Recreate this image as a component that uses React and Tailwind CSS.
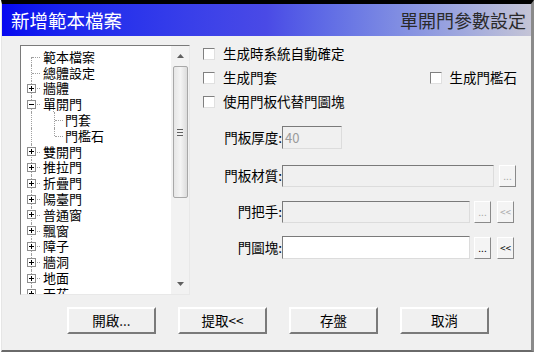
import React from "react";

const font = { fontFamily: '"Noto Sans CJK TC", "Noto Sans", sans-serif' };

function Expander({ minus }) {
  return (
    <span className="relative z-10 flex h-[9px] w-[9px] items-center justify-center border border-[#8e8e8e] bg-white">
      <span className="absolute h-px w-[5px] bg-black" />
      {!minus && <span className="absolute h-[5px] w-px bg-black" />}
    </span>
  );
}

const treeItems = [
  { t: "範本檔案", kind: "leaf" },
  { t: "總體設定", kind: "leaf" },
  { t: "牆體", kind: "plus" },
  { t: "單開門", kind: "minus" },
  { t: "門套", kind: "child" },
  { t: "門檻石", kind: "childLast" },
  { t: "雙開門", kind: "plus" },
  { t: "推拉門", kind: "plus" },
  { t: "折疊門", kind: "plus" },
  { t: "陽臺門", kind: "plus" },
  { t: "普通窗", kind: "plus" },
  { t: "飄窗", kind: "plus" },
  { t: "障子", kind: "plus" },
  { t: "牆洞", kind: "plus" },
  { t: "地面", kind: "plus" },
  { t: "天花", kind: "plus" },
];

function TreeRow({ item, idx }) {
  const dotV = "border-l border-dotted border-[#a0a0a0]";
  const dotH = "border-t border-dotted border-[#a0a0a0]";
  const isChild = item.kind === "child" || item.kind === "childLast";
  return (
    <div className="relative flex h-[15.8px] items-center">
      <div className="relative flex h-full w-[21px] items-center">
        <span className={`absolute left-[10px] ${idx === 0 ? "top-1/2" : "top-0"} bottom-0 ${dotV}`} />
        <span className={`absolute left-[11px] top-1/2 w-[8px] ${isChild ? "" : dotH}`} />
        {(item.kind === "plus" || item.kind === "minus") && (
          <span className="ml-[6px]">
            <Expander minus={item.kind === "minus"} />
          </span>
        )}
      </div>
      {isChild && (
        <div className="relative h-full w-[22px]">
          <span className={`absolute left-[12px] top-0 ${item.kind === "childLast" ? "h-1/2" : "bottom-0"} ${dotV}`} />
          <span className={`absolute left-[13px] top-1/2 w-[8px] ${dotH}`} />
        </div>
      )}
      {item.kind === "minus" && (
        <span className="absolute left-[32px] top-[11px] bottom-0 border-l border-dotted border-[#a0a0a0]" />
      )}
      <span className="ml-[1px] whitespace-nowrap text-[13px] leading-[14px] text-black">{item.t}</span>
    </div>
  );
}

function Checkbox({ label }) {
  return (
    <div className="flex items-center">
      <span className="h-[12px] w-[12px] border border-t-[#808080] border-l-[#808080] border-b-[#e0e0e0] border-r-[#e0e0e0] bg-white" />
      <span className="ml-[8px] text-[13.5px] leading-none text-black">{label}</span>
    </div>
  );
}

function Field({ disabled }) {
  return (
    <div
      className={`h-full flex-1 border border-t-[#7a7a7a] border-l-[#7a7a7a] border-b-[#dcdcdc] border-r-[#dcdcdc] ${
        disabled ? "bg-[#f0f0f0]" : "bg-white"
      }`}
    />
  );
}

function SmallBtn({ children, disabled }) {
  return (
    <div
      className={`flex h-[22px] w-[17px] items-center justify-center border border-t-white border-l-white border-b-[#8a8a8a] border-r-[#8a8a8a] bg-[#f4f4f4] text-[10px] leading-none ${
        disabled ? "text-[#a8a8a8]" : "text-black"
      }`}
    >
      {children}
    </div>
  );
}

function BigBtn({ children }) {
  return (
    <div className="flex h-[27px] w-[89px] items-center justify-center border-2 border-t-[#ffffff] border-l-[#ffffff] border-b-[#7a7a7a] border-r-[#7a7a7a] bg-[#f0f0f0] text-[13.5px] leading-none text-black">
      {children}
    </div>
  );
}

export default function App() {
  return (
    <div className="h-[357px] w-[540px] overflow-hidden bg-white" style={font}>
      <div className="ml-[1px] flex h-[352px] w-[533px] flex-col border-t-4 border-l border-r-[3px] border-b-2 border-t-black border-l-[#e6e6e6] border-r-[#8a8a8a] border-b-[#6a6a6a] bg-[#f0f0f0]">
        <div className="flex h-[32px] items-center justify-between bg-gradient-to-r from-[#0606f0] via-[#4a4ae6] to-[#c4c4d6] pl-[9px] pr-[5px]">
          <span className="text-[18.5px] leading-none text-white">新增範本檔案</span>
          <span className="text-[18px] leading-none text-[#2a2a2a]">單開門參數設定</span>
        </div>
        <div className="flex pl-[18px] pt-[9px]">
          <div className="flex h-[250px] w-[170px] border border-t-[#7a7a7a] border-l-[#7a7a7a] border-b-[#e8e8e8] border-r-[#e8e8e8] bg-white">
            <div className="flex-1 overflow-hidden pt-[3px]">
              {treeItems.map((it, i) => (
                <TreeRow key={i} item={it} idx={i} />
              ))}
            </div>
            <div className="flex w-[18px] flex-col items-center bg-[#f2f2f2]">
              <div className="flex h-[20px] items-center justify-center">
                <svg width="7" height="4" viewBox="0 0 7 4">
                  <path d="M0 4 L3.5 0 L7 4 Z" fill="#606060" />
                </svg>
              </div>
              <div className="flex h-[132px] w-[15px] items-center justify-center rounded-[2px] border border-[#a8a8a8] bg-gradient-to-r from-[#e6e6e6] via-[#f4f4f4] to-[#dcdcdc]">
                <div className="flex flex-col gap-[2px]">
                  <span className="h-px w-[6px] bg-[#606060]" />
                  <span className="h-px w-[6px] bg-[#606060]" />
                  <span className="h-px w-[6px] bg-[#606060]" />
                </div>
              </div>
              <div className="flex-1" />
              <div className="flex h-[20px] items-center justify-center">
                <svg width="7" height="4" viewBox="0 0 7 4">
                  <path d="M0 0 L3.5 4 L7 0 Z" fill="#606060" />
                </svg>
              </div>
            </div>
          </div>
          <div className="ml-[13px] flex flex-col">
            <div className="mt-[3px] flex h-[12px] items-center">
              <Checkbox label="生成時系統自動確定" />
            </div>
            <div className="mt-[12px] flex h-[12px] w-[310px] items-center justify-between">
              <Checkbox label="生成門套" />
              <div className="mr-[-4px]">
                <Checkbox label="生成門檻石" />
              </div>
            </div>
            <div className="mt-[12px] flex h-[12px] items-center">
              <Checkbox label="使用門板代替門圖塊" />
            </div>
            <div className="mt-[18px] flex h-[23px] items-center">
              <span className="w-[79px] text-right text-[13.5px] leading-none text-black">門板厚度:</span>
              <div className="flex h-full w-[60px] items-center border border-t-[#7a7a7a] border-l-[#7a7a7a] border-b-[#dcdcdc] border-r-[#dcdcdc] bg-[#f0f0f0] pl-[2px] text-[13px] leading-none text-[#9a9a9a]">
                40
              </div>
            </div>
            <div className="mt-[16px] flex h-[22px] items-center">
              <span className="w-[79px] text-right text-[13.5px] leading-none text-black">門板材質:</span>
              <div className="flex h-full w-[212px]">
                <Field disabled />
              </div>
              <div className="ml-[5px]">
                <SmallBtn disabled>...</SmallBtn>
              </div>
            </div>
            <div className="mt-[14px] flex h-[22px] items-center">
              <span className="w-[79px] text-right text-[13.5px] leading-none text-black">門把手:</span>
              <div className="flex h-full w-[188px]">
                <Field disabled />
              </div>
              <div className="ml-[4px]">
                <SmallBtn disabled>...</SmallBtn>
              </div>
              <div className="ml-[6px]">
                <SmallBtn disabled>&lt;&lt;</SmallBtn>
              </div>
            </div>
            <div className="mt-[13px] flex h-[23px] items-center">
              <span className="w-[79px] text-right text-[13.5px] leading-none text-black">門圖塊:</span>
              <div className="flex h-full w-[188px]">
                <Field />
              </div>
              <div className="ml-[4px]">
                <SmallBtn>...</SmallBtn>
              </div>
              <div className="ml-[6px]">
                <SmallBtn>&lt;&lt;</SmallBtn>
              </div>
            </div>
          </div>
        </div>
        <div className="mt-[12px] flex gap-[22px] pl-[65px]">
          <BigBtn>開啟...</BigBtn>
          <BigBtn>提取&lt;&lt;</BigBtn>
          <BigBtn>存盤</BigBtn>
          <BigBtn>取消</BigBtn>
        </div>
      </div>
    </div>
  );
}
